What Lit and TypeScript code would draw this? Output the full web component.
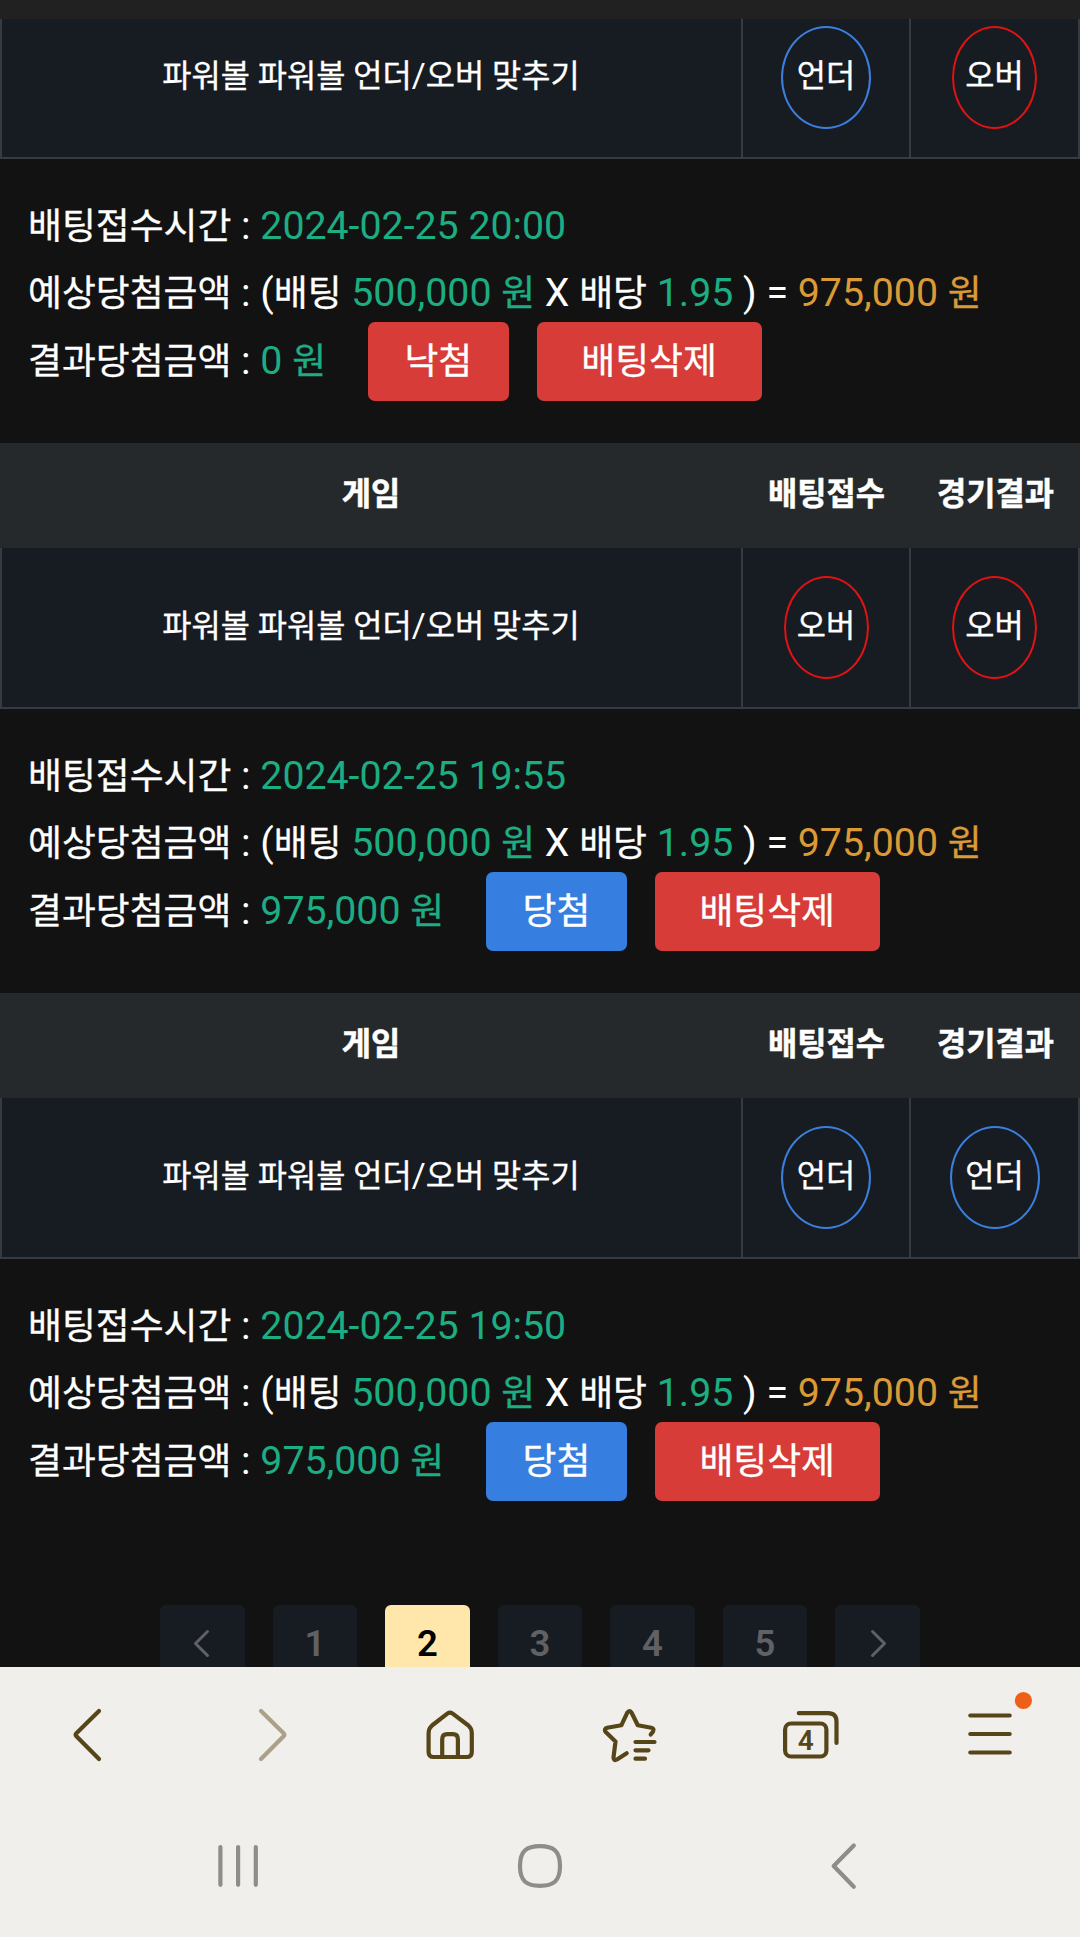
import { LitElement, html, css, svg } from "lit";
import { customElement, property } from "lit/decorators.js";
import { classMap } from "lit/directives/class-map.js";

type Pick = "언더" | "오버";
interface Bet {
  time: string;
  pick: Pick;
  result: Pick;
  payout: string;
  won: boolean;
}

const BETS: Bet[] = [
  { time: "2024-02-25 20:00", pick: "언더", result: "오버", payout: "0", won: false },
  { time: "2024-02-25 19:55", pick: "오버", result: "오버", payout: "975,000", won: true },
  { time: "2024-02-25 19:50", pick: "언더", result: "언더", payout: "975,000", won: true },
];

@customElement("bet-entry")
export class BetEntry extends LitElement {
  static styles = css`
    :host { display: block; color: #fff; font-weight: 400; -webkit-text-stroke-width: 0.3px; }
    .grid { display: grid; grid-template-columns: 742px 169px 169px; text-align: center; }
    .head {
      height: 105px; background: #25292c; font-size: 31.75px; font-weight: 700;
      -webkit-text-stroke-width: 0.5px;
    }
    .head div, .row div { display: flex; align-items: center; justify-content: center; }
    .head div { padding-bottom: 9px; }
    .row {
      height: 161px; box-sizing: border-box; background: #171b22; font-size: 31.75px;
      border: solid #353a43; border-width: 0 2px 2px; grid-template-columns: 739px 168px 169px;
    }
    .row div + div { border-left: 2px solid #353a43; }
    .row .game { padding: 0 1px 10px 0; white-space: pre; }
    .pill {
      box-sizing: border-box; height: 103px; border: 2px solid #e01212; border-radius: 50%;
      width: 85px; display: flex; align-items: center; justify-content: center; padding-bottom: 10px;
    }
    .pill.under { border-color: #3b7fdd; width: 90px; }
    .info { height: 284px; box-sizing: border-box; padding: 33.5px 0 0 28px; font-size: 36.83px; }
    .line { height: 67.5px; line-height: 67.5px; white-space: pre; display: flex; align-items: center; }
    .n { font-size: 1.067em; -webkit-text-stroke-width: 0; }
    .g { color: #1cad82; }
    .o { color: #dc9a36; }
    .btn {
      height: 79px; width: 140.5px; border-radius: 7px; margin-left: 42px; flex: none;
      display: flex; align-items: center; justify-content: center; background: #d83c39;
    }
    .btn.win { background: #367edf; }
    .btn.del { width: 225px; margin-left: 28px; }
  `;

  @property({ attribute: false }) bet!: Bet;
  @property({ type: Boolean }) headless = false;

  private pill(p: Pick) {
    return html`<span class=${classMap({ pill: true, under: p === "언더" })}>${p}</span>`;
  }

  render() {
    const b = this.bet;
    return html`
      ${this.headless ? "" : html`<div class="grid head"><div>게임</div><div>배팅접수</div><div>경기결과</div></div>`}
      <div class="grid row">
        <div class="game"><span>파워볼 파워볼 언더<span class="n">/</span>오버 맞추기</span></div>
        <div>${this.pill(b.pick)}</div>
        <div>${this.pill(b.result)}</div>
      </div>
      <div class="info">
        <div class="line"><span>배팅접수시간<span class="n"> : <span class="g">${b.time}</span></span></span></div>
        <div class="line"><span>예상당첨금액<span class="n"> : (</span>배팅<span class="n"> <span class="g">500,000 </span></span><span class="g">원</span><span class="n"> X </span>배당<span class="n"> <span class="g">1.95</span> ) = <span class="o">975,000 </span></span><span class="o">원</span></span></div>
        <div class="line"><span>결과당첨금액<span class="n"> : <span class="g">${b.payout} </span></span><span class="g">원</span></span><span class=${classMap({ btn: true, win: b.won })}>${b.won ? "당첨" : "낙첨"}</span><span class="btn del">배팅삭제</span></div>
      </div>`;
  }
}

@customElement("app-root")
export class AppRoot extends LitElement {
  static styles = css`
    :host {
      display: flex; flex-direction: column; width: 1080px; height: 1937px; overflow: hidden;
      background: #121212; font-family: Roboto, "Noto Sans CJK KR", sans-serif;
    }
    .top { height: 19px; background: #212121; flex: none; }
    .content { height: 1648px; overflow: hidden; flex: none; }
    .first { margin-top: -21px; }
    .pages { display: flex; justify-content: center; gap: 28.1px; padding-top: 62px; }
    .page {
      width: 84.4px; height: 84px; box-sizing: border-box; padding-bottom: 7px; border-radius: 6px;
      background: #171b22; color: #5f6165; font-size: 36.5px; font-weight: 600;
      display: flex; align-items: center; justify-content: center;
    }
    .page.on { background: #ffe7ab; color: #000; }
    .bars { flex: 1; background: #f1efeb; }
    svg { display: block; }
    .tabs { font-family: Roboto, sans-serif; font-weight: 600; font-size: 28px; }
  `;

  private pageItem(label: string) {
    const arrow = label === "<" ? "M15.5 3.5L3.5 15.5L15.5 27.5" : label === ">" ? "M6.5 3.5L18.5 15.5L6.5 27.5" : "";
    return html`<div class=${classMap({ page: true, on: label === "2" })}>${arrow
      ? html`<svg width="22" height="32" viewBox="0 0 22 32"><path d=${arrow} fill="none" stroke="#5f6165" stroke-width="3" stroke-linecap="round" stroke-linejoin="round"/></svg>`
      : label}</div>`;
  }

  private browserIcons() {
    return svg`
      <g fill="none" stroke="#57451a" stroke-width="4.2" stroke-linecap="round" stroke-linejoin="round">
        <path d="M99 44L76.4 66.2Q75 67.7 76.4 69.2L99 92"/>
        <path stroke="#aaa189" d="M261 44L283.6 66.2Q285 67.7 283.6 69.2L261 92"/>
        <path d="M447.3 46.6L432 58.5Q428.6 61.5 428.6 66V85Q428.6 90 433.6 90H466.8Q471.8 90 471.8 85V66Q471.8 61.5 468.4 58.5L452.7 46.6Q450 44.7 447.3 46.6Z"/>
        <path d="M442.2 90V72.5Q442.2 67.2 447.2 67.2H452.9Q457.9 67.2 457.9 72.5V90"/>
        <path d="M650.7 67.5L653 64.6Q654.6 61.6 651.3 60.7L637.8 58.3L631.6 45.7Q629.3 42.5 627.3 45.7L621.3 58.3L607.2 60.8Q603.5 61.8 605.7 65L615.5 74.5L613.5 90.5Q613.8 94.2 617 92.5L626.7 86.3"/>
        <path d="M635.5 75H654.5M635.5 83.3H648.5M635.5 91.7H645"/>
        <rect x="785.1" y="56.5" width="41.3" height="33" rx="6"/>
        <path d="M798.8 46.2H828Q836.5 46.2 836.5 54.7V76"/>
        <path d="M970.3 48.5H1009.7M970.3 67H1009.7M970.3 85.5H1009.7"/>
      </g>
      <text class="tabs" x="805.8" y="83" text-anchor="middle" fill="#57451a">4</text>
      <circle cx="1023.4" cy="33.5" r="8.6" fill="#ee5f17"/>`;
  }

  private systemIcons() {
    return svg`
      <g fill="none" stroke="#8e8d8a" stroke-width="4.2" stroke-linecap="round" stroke-linejoin="round">
        <path d="M220.4 180V217.8M238.1 180V217.8M255.8 180V217.8"/>
        <path d="M540 179.2C553 179.2 560 183.5 560 199C560 214.5 553 218.8 540 218.8C527 218.8 520 214.5 520 199C520 183.5 527 179.2 540 179.2Z"/>
        <path d="M853.8 178.5L833.7 199L853.8 219.8"/>
      </g>`;
  }

  render() {
    return html`
      <div class="top"></div>
      <div class="content">
        ${BETS.map((b, i) => html`<bet-entry class=${classMap({ first: i === 0 })} .bet=${b} ?headless=${i === 0}></bet-entry>`)}
        <div class="pages">${["<", "1", "2", "3", "4", "5", ">"].map((p) => this.pageItem(p))}</div>
      </div>
      <div class="bars"><svg width="1080" height="270" viewBox="0 0 1080 270">${this.browserIcons()}${this.systemIcons()}</svg></div>`;
  }
}
